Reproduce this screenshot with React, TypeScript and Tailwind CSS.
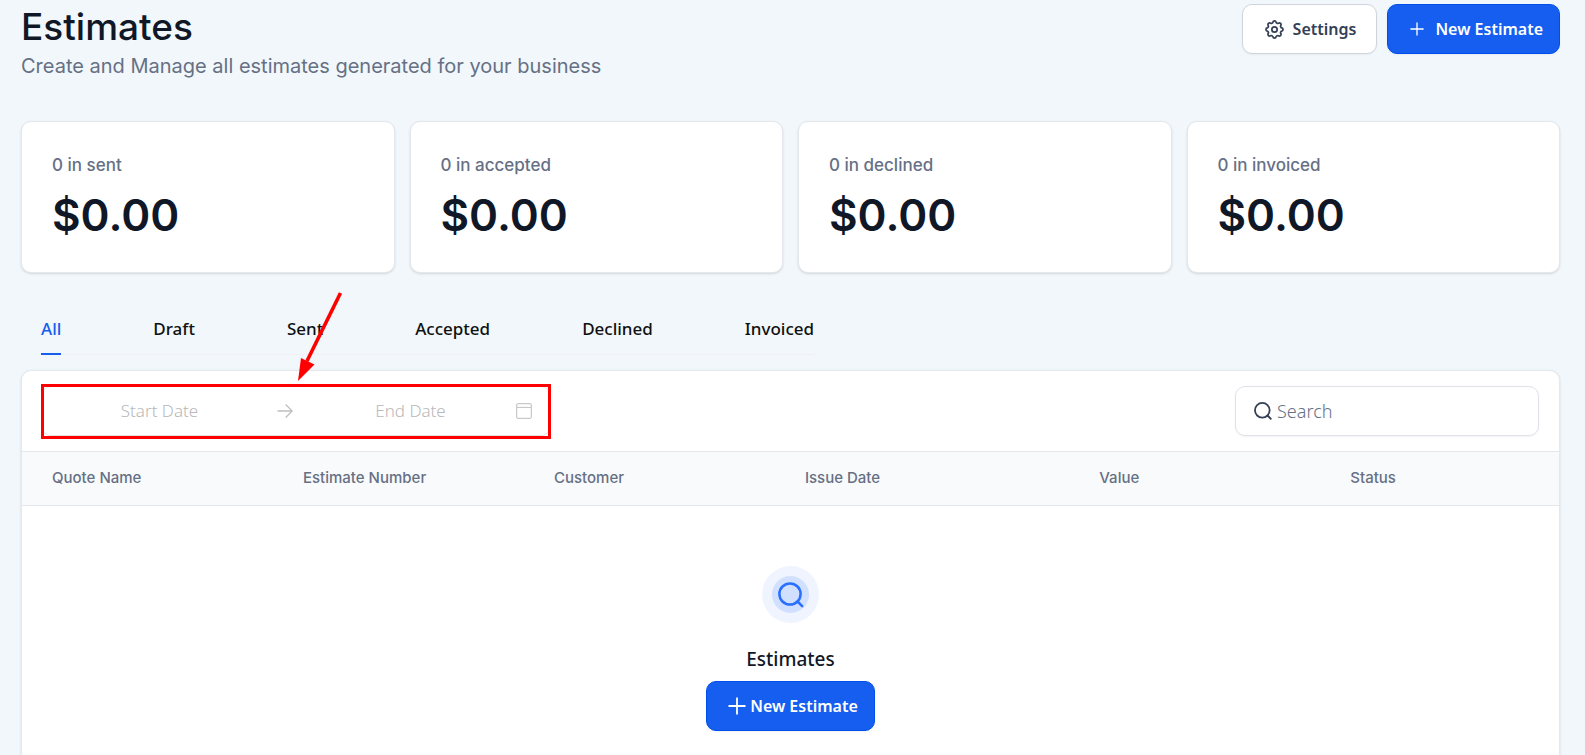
import React from "react";

const stats = [
  { label: "0 in sent", value: "$0.00" },
  { label: "0 in accepted", value: "$0.00" },
  { label: "0 in declined", value: "$0.00" },
  { label: "0 in invoiced", value: "$0.00" },
];

const tabs = ["All", "Draft", "Sent", "Accepted", "Declined", "Invoiced"];

const columns = ["Quote Name", "Estimate Number", "Customer", "Issue Date", "Value", "Status"];

function GearIcon() {
  return (
    <svg viewBox="2 2 20 20" className="size-[19px]" fill="none" stroke="currentColor" strokeWidth="1.8" strokeLinecap="round" strokeLinejoin="round" aria-hidden="true">
      <path d="M10.325 4.317c.426-1.756 2.924-1.756 3.35 0a1.724 1.724 0 002.573 1.066c1.543-.94 3.31.826 2.37 2.37a1.724 1.724 0 001.065 2.572c1.756.426 1.756 2.924 0 3.35a1.724 1.724 0 00-1.066 2.573c.94 1.543-.826 3.31-2.37 2.37a1.724 1.724 0 00-2.572 1.065c-.426 1.756-2.924 1.756-3.35 0a1.724 1.724 0 00-2.573-1.066c-1.543.94-3.31-.826-2.37-2.37a1.724 1.724 0 00-1.065-2.572c-1.756-.426-1.756-2.924 0-3.35a1.724 1.724 0 001.066-2.573c-.94-1.543.826-3.31 2.37-2.37.996.608 2.296.07 2.572-1.065z" />
      <circle cx="12" cy="12" r="2.8" />
    </svg>
  );
}

function PlusIcon({ className, weight }: { className: string; weight: number }) {
  return (
    <svg viewBox="0 0 18 18" className={className} fill="none" stroke="currentColor" strokeWidth={weight} aria-hidden="true">
      <path d="M9 0.5v17M0.5 9h17" />
    </svg>
  );
}

function SearchIcon({ className, weight }: { className: string; weight: number }) {
  return (
    <svg viewBox="0 0 26 26" className={className} fill="none" stroke="currentColor" strokeWidth={weight} strokeLinecap="round" aria-hidden="true">
      <circle cx="12" cy="12" r="10.6" />
      <path d="M19.5 19.500l4.700 4.700" />
    </svg>
  );
}

function DateRange() {
  return (
    <div className="relative flex h-[50px] w-[510px] items-center rounded-[10px] border border-[#e1e5ea] pr-[18px]">
      <input
        type="text"
        aria-label="Start date"
        placeholder="Start Date"
        className="w-0 flex-1 bg-transparent text-center text-[17px] font-light text-[#374151] outline-none placeholder:text-[#b8b8b8]"
      />
      <svg viewBox="0 0 16 16" className="size-4 text-[#bfbfbf]" fill="none" stroke="currentColor" strokeWidth="1.3" aria-hidden="true">
        <path d="M0.5 8h14.5M8.7 1.5L15.2 8l-6.5 6.5" />
      </svg>
      <input
        type="text"
        aria-label="End date"
        placeholder="End Date"
        className="w-0 flex-1 bg-transparent text-center text-[17px] font-light text-[#374151] outline-none placeholder:text-[#b8b8b8]"
      />
      <svg viewBox="0 0 16 16" className="-ml-3 size-4 text-[#c9c9c9]" fill="none" stroke="currentColor" strokeWidth="1.2" aria-hidden="true">
        <rect x="0.6" y="0.6" width="14.8" height="14.8" rx="1.8" />
        <path d="M0.6 4.4h14.8" />
      </svg>
      <div className="pointer-events-none absolute -inset-x-px -top-[3px] -bottom-1 border-3 border-[#ff0000]" />
      <svg viewBox="0 0 50 92" className="pointer-events-none absolute -top-[97px] left-[253px] h-[92px] w-[50px]" aria-hidden="true">
        <path d="M45.500 3L12 71" stroke="#ff0000" strokeWidth="3.6" />
        <path d="M3 91L6 68l13.500 6.500z" fill="#ff0000" />
      </svg>
    </div>
  );
}

export default function App() {
  return (
    <div className="flex min-h-screen flex-col bg-[#f1f7fa] pr-[25px] pl-[21px] pt-1 font-['Noto_Sans',sans-serif] text-[#101828]">
      <header className="flex items-start justify-between font-['Inter',sans-serif]">
        <div>
          <h1 className="text-[37px] leading-[46px] font-medium">Estimates</h1>
          <p className="mt-[2px] text-[20px] leading-[28px] text-[#667085]">Create and Manage all estimates generated for your business</p>
        </div>
        <div className="flex gap-[10px] font-['Noto_Sans',sans-serif]">
          <button type="button" className="flex h-[50px] items-center gap-[9px] rounded-[10px] border border-[#d0d5dd] bg-white pr-5 pl-[22px] text-[16px] font-semibold text-[#344054] shadow-xs">
            <GearIcon />
            Settings
          </button>
          <button type="button" className="flex h-[50px] items-center gap-[11px] rounded-[10px] border border-[#004eeb] bg-[#155eef] pr-4 pl-[22px] text-[16px] font-semibold text-white shadow-xs">
            <PlusIcon className="size-[14px]" weight={1.7} />
            New Estimate
          </button>
        </div>
      </header>

      <section className="mt-[41px] grid grid-cols-4 gap-[15px] font-['Inter',sans-serif]">
        {stats.map((stat) => (
          <div key={stat.label} className="h-[152px] rounded-[10px] border border-[#e4e7ec] bg-white px-[30px] pt-[30px] shadow-sm">
            <p className="text-[17px] leading-[26px] font-medium text-[#667085]">{stat.label}</p>
            <p className="mt-[9px] text-[44px] leading-[56px] font-semibold">{stat.value}</p>
          </div>
        ))}
      </section>

      <nav className="mt-[42px] ml-5 flex gap-[92px] self-start border-b border-[#eef0f3] text-[17px] font-medium">
        {tabs.map((tab, i) => (
          <a
            key={tab}
            href="#"
            className={
              i === 0
                ? "-mb-px flex h-[40px] border-b-2 border-[#155eef] leading-[28px] text-[#155eef]"
                : "flex h-[39px] leading-[28px] text-[#101010]"
            }
          >
            {tab}
          </a>
        ))}
      </nav>

      <main className="mt-[15px] flex-1 rounded-t-[10px] border border-b-0 border-[#e4e7ec] bg-white shadow-sm">
        <div className="flex items-center justify-between py-[15px] pr-5 pl-[19px]">
          <DateRange />
          <label className="flex h-[50px] w-[304px] items-center gap-[5px] rounded-[10px] border border-[#dfe2e8] px-[18px] text-[#344054] shadow-xs">
            <SearchIcon className="size-[18px]" weight={2.6} />
            <input
              type="search"
              aria-label="Search"
              placeholder="Search"
              className="w-0 flex-1 bg-transparent text-[18px] font-light outline-none placeholder:text-[#667085]"
            />
          </label>
        </div>
        <table className="w-full table-fixed border-y border-[#e4e7ec] bg-[#f9fafb] font-['Inter',sans-serif]">
          <colgroup>
            <col className="w-[16.33%]" />
            <col className="w-[16.33%]" />
            <col className="w-[16.33%]" />
            <col className="w-[19.15%]" />
            <col className="w-[16.33%]" />
            <col />
          </colgroup>
          <thead>
            <tr>
              {columns.map((column) => (
                <th key={column} scope="col" className="h-[54px] pl-[30px] text-left text-[15px] font-medium text-[#667085]">
                  {column}
                </th>
              ))}
            </tr>
          </thead>
        </table>
        <div className="flex flex-col items-center pt-[60px]">
          <div className="flex size-[57px] items-center justify-center rounded-full bg-[#eff4ff]">
            <div className="flex size-[37px] items-center justify-center rounded-full bg-[#d1e0ff] text-[#2970ff]">
              <SearchIcon className="size-[26px]" weight={2.5} />
            </div>
          </div>
          <h2 className="mt-[21px] text-[19px] leading-[30px] font-medium">Estimates</h2>
          <button type="button" className="mt-[7px] flex h-[50px] items-center gap-1 rounded-[10px] border border-[#004eeb] bg-[#155eef] pr-4 pl-[21px] text-[16px] font-semibold text-white shadow-xs">
            <PlusIcon className="size-[18px]" weight={1.8} />
            New Estimate
          </button>
        </div>
      </main>
    </div>
  );
}
